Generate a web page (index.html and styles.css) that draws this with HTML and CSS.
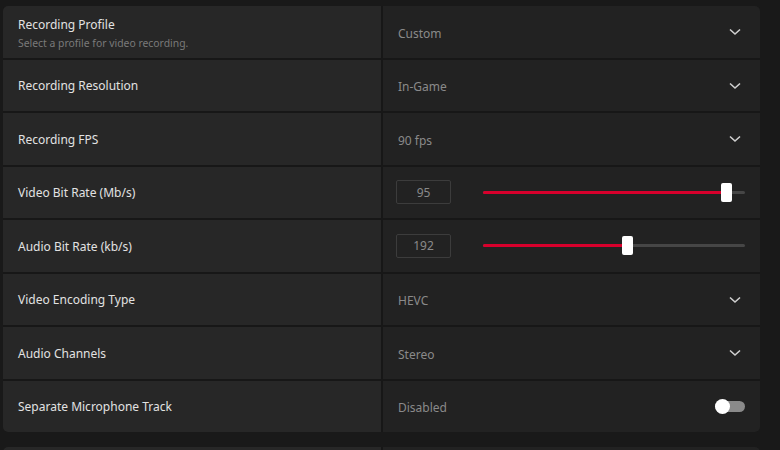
FILE: index.html
```html
<!DOCTYPE html>
<html>
<head>
<meta charset="utf-8">
<link rel="stylesheet" href="styles.css">
</head>
<body>
<div class="page">
  <div class="card">
    <div class="label two"><div class="title">Recording Profile</div><div class="sub">Select a profile for video recording.</div></div>
    <div class="ctrl"><span class="val">Custom</span><svg class="chev" viewBox="0 0 12 8"><path d="M1 1.5 L6 6 L11 1.5"/></svg></div>

    <div class="label"><div class="title">Recording Resolution</div></div>
    <div class="ctrl"><span class="val">In-Game</span><svg class="chev" viewBox="0 0 12 8"><path d="M1 1.5 L6 6 L11 1.5"/></svg></div>

    <div class="label"><div class="title">Recording FPS</div></div>
    <div class="ctrl"><span class="val">90 fps</span><svg class="chev" viewBox="0 0 12 8"><path d="M1 1.5 L6 6 L11 1.5"/></svg></div>

    <div class="label"><div class="title">Video Bit Rate (Mb/s)</div></div>
    <div class="ctrl slider-row">
      <div class="numbox">95</div>
      <div class="slider"><div class="fill" style="width: 93%"></div><div class="thumb" style="left: 93%"></div></div>
    </div>

    <div class="label"><div class="title">Audio Bit Rate (kb/s)</div></div>
    <div class="ctrl slider-row">
      <div class="numbox">192</div>
      <div class="slider"><div class="fill" style="width: 55%"></div><div class="thumb" style="left: 55%"></div></div>
    </div>

    <div class="label"><div class="title">Video Encoding Type</div></div>
    <div class="ctrl"><span class="val">HEVC</span><svg class="chev" viewBox="0 0 12 8"><path d="M1 1.5 L6 6 L11 1.5"/></svg></div>

    <div class="label"><div class="title">Audio Channels</div></div>
    <div class="ctrl"><span class="val">Stereo</span><svg class="chev" viewBox="0 0 12 8"><path d="M1 1.5 L6 6 L11 1.5"/></svg></div>

    <div class="label"><div class="title">Separate Microphone Track</div></div>
    <div class="ctrl"><span class="val">Disabled</span><div class="toggle"><div class="knob"></div></div></div>
  </div>
  <div class="card next">
    <div class="label"></div>
    <div class="ctrl"></div>
  </div>
</div>
</body>
</html>
```
FILE: styles.css
```css
html, body {
  margin: 0;
  padding: 0;
  background: #191919;
  overflow: hidden;
}
body {
  font-family: "Noto Sans", "Open Sans", sans-serif;
  width: 780px;
  height: 450px;
}
.page {
  height: 450px;
  overflow: hidden;
  padding: 6px 20px 0 3px;
  display: flex;
  flex-direction: column;
  gap: 15px;
}
.card {
  display: grid;
  grid-template-columns: 378px 1fr;
  grid-auto-rows: 51.5px;
  gap: 2px;
  background: #171717;
  border-radius: 5px;
  overflow: hidden;
  flex: none;
}
.label {
  background: #272727;
  display: flex;
  flex-direction: column;
  justify-content: center;
  padding: 2px 0 0 15px;
}
.label.two {
  justify-content: flex-start;
  padding-top: 11px;
  box-sizing: border-box;
}
.title {
  color: #e2e2e2;
  font-size: 12px;
  line-height: 16px;
}
.sub {
  color: #7a7a7a;
  font-size: 10.4px;
  line-height: 13px;
  margin-top: 4px;
}
.ctrl {
  background: #222222;
  display: flex;
  align-items: center;
  padding: 0 15px 0 15px;
}
.val {
  color: #8a8a8a;
  font-size: 12px;
  flex: 1;
  padding-top: 3px;
}
.chev {
  width: 12px;
  height: 8px;
  margin-right: 4px;
  margin-top: 1px;
  fill: none;
  stroke: #cfcfcf;
  stroke-width: 1.6;
}
.slider-row {
  padding-left: 13px;
}
.numbox {
  width: 53px;
  height: 22px;
  border: 1px solid #3c3c3c;
  border-radius: 2px;
  color: #8a8a8a;
  font-size: 12px;
  display: flex;
  align-items: center;
  justify-content: center;
  flex: none;
}
.slider {
  position: relative;
  flex: 1;
  height: 3px;
  margin-left: 32px;
  background: #464646;
  border-radius: 2px;
}
.fill {
  position: absolute;
  left: 0;
  top: 0;
  bottom: 0;
  background: #d8002c;
  border-radius: 2px;
}
.thumb {
  position: absolute;
  top: -8px;
  width: 11px;
  height: 19px;
  margin-left: -5.5px;
  background: #ffffff;
  border-radius: 2px;
}
.toggle {
  position: relative;
  width: 30px;
  height: 11px;
  background: #8a8a8a;
  border-radius: 6px;
}
.knob {
  position: absolute;
  left: 0;
  top: -2px;
  width: 15px;
  height: 15px;
  border-radius: 50%;
  background: #ffffff;
}
.next {
  grid-auto-rows: 40px;
}
```
